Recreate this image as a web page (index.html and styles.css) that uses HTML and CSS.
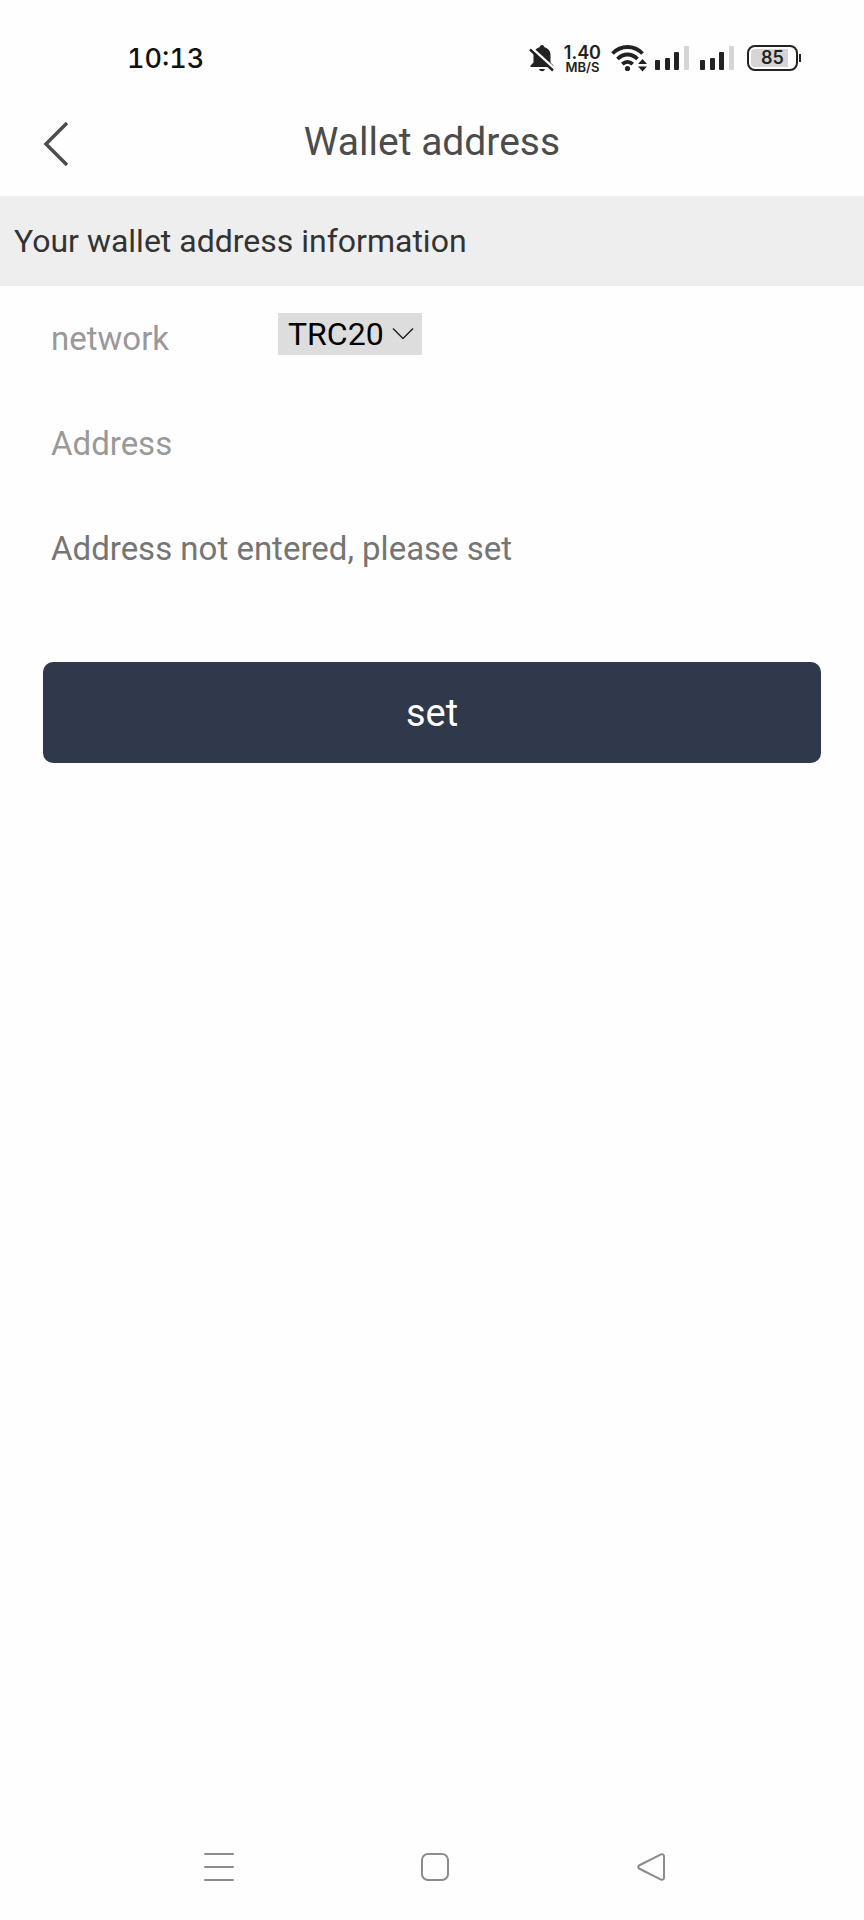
FILE: index.html
```html
<!DOCTYPE html>
<html lang="en">
<head>
    <meta charset="UTF-8">
    <meta name="viewport" content="width=device-width, initial-scale=1.0">
    <title>Wallet address</title>
    <link rel="stylesheet" href="styles.css">
</head>
<body>
    <div class="status-bar">
        <span class="time">10:13</span>
        <div class="status-icons">
            <svg class="bell" width="26" height="28" viewBox="0 0 26 28">
                <path d="M13 1c1.500 0 2.300 1 2.500 2.300C19.500 4.300 21.500 7.500 21.500 11v7.500l3 3V23H1.500v-1.500l3-3V11c0-3.500 2-6.700 6-7.700C10.700 2 11.500 1 13 1z" fill="#222"/>
                <path d="M10 25h6c-.5 1.500-1.500 2.200-3 2.200S10.500 26.500 10 25z" fill="#222"/>
                <path d="M2 3.500L26 25.500" stroke="#fff" stroke-width="3"/>
                <path d="M1 5.500L24 26.500" stroke="#222" stroke-width="2.400"/>
            </svg>
            <div class="speed">
                <span class="speed-value">1.40</span>
                <span class="speed-unit">MB/S</span>
            </div>
            <svg class="wifi" width="36" height="28" viewBox="0 0 36 28">
                <g fill="none" stroke="#222" stroke-width="3.800">
                    <path d="M1.500 9.500C10 .8 23 .8 31.500 9.500"/>
                    <path d="M6.500 15C12.500 9 20.500 9 26.500 15"/>
                    <path d="M11.300 20.200C14.500 17 18.500 17 21.700 20.200"/>
                </g>
                <circle cx="16.500" cy="24.500" r="2.600" fill="#222"/>
                <path d="M27 20l4.500-5 4.500 5zM27 22.500l4.500 5 4.500-5z" fill="#222"/>
            </svg>
            <svg class="signal" width="35" height="26" viewBox="0 0 35 26">
                <rect x="1" y="15" width="5" height="10" rx="1" fill="#222"/>
                <rect x="11" y="13" width="5" height="12" rx="1" fill="#222"/>
                <rect x="20" y="7" width="5" height="18" rx="1" fill="#222"/>
                <rect x="30" y="1" width="5" height="24" rx="1" fill="#d5d5d5"/>
            </svg>
            <svg class="signal" width="35" height="26" viewBox="0 0 35 26">
                <rect x="1" y="15" width="5" height="10" rx="1" fill="#222"/>
                <rect x="11" y="13" width="5" height="12" rx="1" fill="#222"/>
                <rect x="20" y="7" width="5" height="18" rx="1" fill="#222"/>
                <rect x="30" y="1" width="5" height="24" rx="1" fill="#d5d5d5"/>
            </svg>
            <div class="battery">
                <span class="battery-level">85</span>
            </div>
        </div>
    </div>

    <header class="header">
        <button class="back-btn" type="button" aria-label="Back">
            <svg width="28" height="46" viewBox="0 0 28 46">
                <path d="M25 2L4 23L25 44" fill="none" stroke="#4c4c4c" stroke-width="3.500"/>
            </svg>
        </button>
        <h1 class="title">Wallet address</h1>
    </header>

    <h2 class="section-title">Your wallet address information</h2>

    <form class="wallet-form">
        <div class="form-row">
            <label class="form-label" for="network">network</label>
            <div class="select-box">
                <select id="network" class="network-select">
                    <option>TRC20</option>
                </select>
                <svg class="arrow" width="22" height="14" viewBox="0 0 22 14">
                    <path d="M1 1.500L11 11.500L21 1.500" fill="none" stroke="#222" stroke-width="1.500"/>
                </svg>
            </div>
        </div>
        <div class="form-row">
            <label class="form-label" for="address">Address</label>
        </div>
        <div class="form-row">
            <input type="text" id="address" class="address-input" placeholder="Address not entered, please set">
        </div>
        <button class="set-btn" type="button">set</button>
    </form>

    <nav class="nav-bar">
        <button class="nav-btn" type="button" aria-label="Recent apps">
            <svg width="30" height="30" viewBox="0 0 30 30">
                <path d="M1 2H29M1 15H29M1 28H29" stroke="#8c8c8c" stroke-width="2" stroke-linecap="round"/>
            </svg>
        </button>
        <button class="nav-btn" type="button" aria-label="Home">
            <svg width="30" height="30" viewBox="0 0 30 30">
                <rect x="2" y="2" width="26" height="26" rx="6" fill="none" stroke="#8c8c8c" stroke-width="2"/>
            </svg>
        </button>
        <button class="nav-btn" type="button" aria-label="Back">
            <svg width="30" height="30" viewBox="0 0 30 30">
                <path d="M25.500 2.200L3 13.500Q1.500 15 3 16.500L25.500 27.800Q28 28 28 25.500V4.500Q28 2 25.500 2.200z" fill="none" stroke="#8c8c8c" stroke-width="2" stroke-linejoin="round"/>
            </svg>
        </button>
    </nav>
</body>
</html>
```

FILE: styles.css
```css
* {
    box-sizing: border-box;
}

body {
    font-family: Roboto, "Liberation Sans", sans-serif;
    background-color: #fefefe;
    color: #333;
    margin: 0;
    min-height: 100vh;
    display: flex;
    flex-direction: column;
}

button {
    background: none;
    border: none;
    padding: 0;
    font-family: inherit;
    cursor: pointer;
}

svg {
    display: block;
}

/* Status bar */
.status-bar {
    display: flex;
    justify-content: space-between;
    align-items: center;
    height: 88px;
    padding: 28px 63px 0 127px;
}

.time {
    font-family: Inter, sans-serif;
    font-size: 27px;
    font-weight: 500;
    font-variant-numeric: tabular-nums;
    color: #111;
}

.status-icons {
    display: flex;
    align-items: center;
    gap: 10px;
    color: #222;
}

.bell {
    margin-right: -1px;
}

.speed {
    display: flex;
    flex-direction: column;
    align-items: center;
    font-family: Inter, sans-serif;
    font-weight: 600;
}

.speed-value {
    font-size: 18px;
    line-height: 17px;
}

.speed-unit {
    font-size: 13px;
    line-height: 12px;
}

.wifi {
    margin-right: -3px;
}

.battery {
    display: flex;
    position: relative;
    width: 51px;
    height: 26px;
    margin: 0 3px;
    padding: 2px;
    border: 2px solid #222;
    border-radius: 8px;
}

.battery::after {
    content: "";
    position: absolute;
    right: -5px;
    top: 7px;
    width: 2px;
    height: 8px;
    background-color: #222;
}

.battery-level {
    flex: 1;
    background: linear-gradient(to right, #d5d5d5 85%, transparent 85%);
    border-radius: 4px;
    font-family: Inter, sans-serif;
    font-size: 18px;
    font-weight: 600;
    line-height: 18px;
    text-align: center;
}

/* Header */
.header {
    display: grid;
    grid-template-columns: 80px 1fr 80px;
    align-items: center;
    height: 108px;
}

.back-btn {
    justify-self: end;
    padding: 4px 10px 0 0;
}

.title {
    margin: 0;
    font-size: 39px;
    font-weight: 400;
    line-height: 48px;
    color: #4c4c4c;
    text-align: center;
}

.section-title {
    margin: 0;
    padding: 0 14px;
    font-size: 32px;
    font-weight: 400;
    line-height: 90px;
    background-color: #eee;
}

/* Form */
.wallet-form {
    padding: 0 43px;
}

.form-row {
    display: flex;
    align-items: center;
    height: 105px;
    padding: 0 8px;
}

.form-label {
    width: 227px;
    font-size: 33px;
    color: #999;
}

.select-box {
    display: grid;
    align-items: center;
    margin-bottom: 10px;
}

.network-select {
    grid-area: 1 / 1;
    appearance: none;
    height: 42px;
    padding: 0 38px 0 10px;
    border: none;
    border-radius: 0;
    background-color: #ddd;
    color: #000;
    font-family: inherit;
    font-size: 32px;
}

.arrow {
    grid-area: 1 / 1;
    justify-self: end;
    margin-right: 8px;
    pointer-events: none;
}

.address-input {
    width: 100%;
    padding: 0;
    border: none;
    outline: none;
    background: none;
    font-family: inherit;
    font-size: 33px;
    color: #333;
}

.address-input::placeholder {
    color: #757575;
}

.set-btn {
    display: block;
    width: 100%;
    height: 101px;
    margin-top: 61px;
    border-radius: 10px;
    background-color: #30384b;
    color: #fff;
    font-size: 38px;
}

/* Bottom navigation */
.nav-bar {
    display: grid;
    grid-template-columns: repeat(3, 1fr);
    margin-top: auto;
    padding: 0 105px 38px 111px;
}

.nav-btn {
    justify-self: center;
}
```
